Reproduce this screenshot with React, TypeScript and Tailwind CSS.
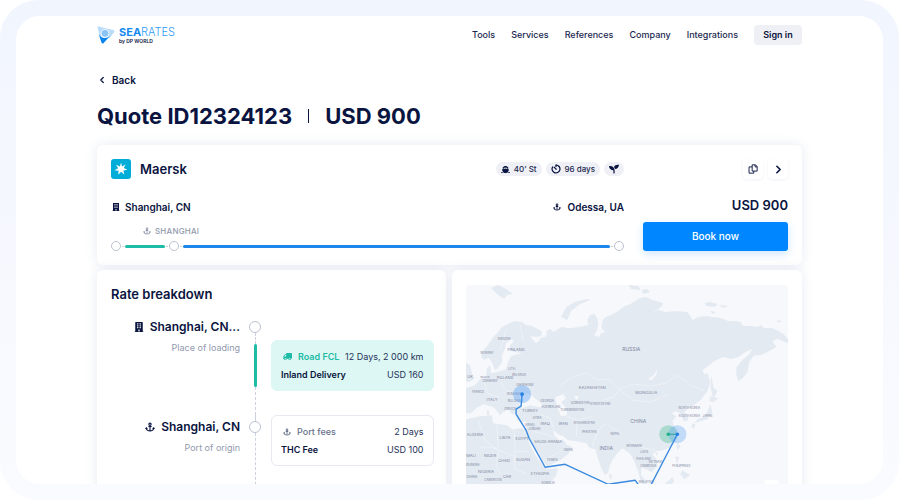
import React from 'react';
import clsx from 'clsx';
import { FaAnchor, FaBuilding, FaSeedling, FaShip, FaTruck } from 'react-icons/fa';
import { LuChevronLeft, LuChevronRight } from 'react-icons/lu';

const navLinks = ['Tools', 'Services', 'References', 'Company', 'Integrations'];

const Logo = () => (
  <a href="#" className="flex items-start gap-1 leading-none">
    <svg viewBox="0 0 54 54" className="h-[18px] w-[18px]">
      <path d="M1 1 L51 13 Q54 15 51 19 L38 36 L8 30 Z" fill="#b9dcfb" />
      <path d="M5 23 Q12 36 23 36 Q33 36 39 30 L20 51 Q16 55 13 49 Z" fill="#0a84ee" />
      <circle cx="24" cy="22" r="12" fill="#8cc4f9" stroke="#eef7ff" strokeWidth="3" />
    </svg>
    <span className="flex flex-col">
      <span className="text-[11px] leading-3 text-[#2f9bf5]">
        <b className="font-bold text-[#168af0]">SEA</b>
        <span className="font-light">RATES</span>
      </span>
      <span className="text-[5px] leading-[6px] font-semibold text-[#0a1440]">by DP WORLD</span>
    </span>
  </a>
);

const Header = () => (
  <header className="flex h-5 items-center justify-between">
    <Logo />
    <nav className="flex items-center gap-4 text-[9px] font-medium text-[#1c2850]">
      {navLinks.map((link) => (
        <a key={link} href="#">
          {link}
        </a>
      ))}
      <button className="h-5 w-12 rounded-[4px] bg-[#eff0f5] font-semibold text-[#0a1440]">Sign in</button>
    </nav>
  </header>
);

const Pill = ({ children }: { children: React.ReactNode }) => (
  <span className="flex h-[14px] items-center gap-1 rounded-full bg-[#eff0f5] px-[5px] text-[8px] leading-none font-medium text-[#1c2850]">
    {children}
  </span>
);

const TimerIcon = () => (
  <svg viewBox="0 0 24 24" className="h-[10px] w-[10px]" fill="none" stroke="#0a1440" strokeWidth="3">
    <path d="M12 2.5 A9.5 9.5 0 1 1 4.5 6.2" />
    <path d="M12.5 12.5 L7.5 7.5" strokeLinecap="round" />
    <path d="M12 1 V7" />
  </svg>
);

const CopyIcon = () => (
  <svg viewBox="0 0 24 24" className="h-[10px] w-[10px]" fill="none" stroke="#0a1440" strokeWidth="2.2">
    <path d="M10 2 H18 L22 6 V17 H10 Z" strokeLinejoin="round" />
    <path d="M17 2 V7 H22" />
    <path d="M10 7 H2.5 V22 H14 V17" strokeLinejoin="round" />
  </svg>
);

const Stop = () => <span className="h-[10px] w-[10px] shrink-0 rounded-full border border-[#bcc1d0] bg-white" />;

const Dash = () => <span className="h-px w-[2px] bg-[#cdd1de]" />;

const QuoteCard = () => (
  <section className="rounded-md bg-white px-[14px] pt-[14px] pb-[14px] shadow-[0_0_12px_rgba(70,90,160,0.13)]">
    <div className="flex gap-[19px]">
      <div className="flex-1">
        <div className="flex h-5 items-center justify-between">
          <div className="flex items-center gap-[9px]">
            <svg viewBox="0 0 20 20" className="h-5 w-5">
              <rect width="20" height="20" rx="3" fill="#00add8" />
              <path
                d="M10 3.6 L11 7.5 L14.6 5.4 L12.7 9 L16.4 10.7 L12.4 11.4 L13.3 15.5 L10.1 12.8 L7.2 15.8 L7.6 11.7 L3.5 11.2 L7.1 9.2 L5.1 5.7 L8.9 7.4 Z"
                fill="#fff"
              />
            </svg>
            <h2 className="text-[13px] leading-4 font-semibold">Maersk</h2>
          </div>
          <div className="flex gap-1">
            <Pill>
              <FaShip size={9} color="#0a1440" /> 40’ St
            </Pill>
            <Pill>
              <TimerIcon /> 96 days
            </Pill>
            <Pill>
              <FaSeedling size={10} color="#0a1440" />
            </Pill>
          </div>
        </div>
        <div className="mt-[22px] flex h-3 items-center justify-between text-[10px] font-semibold">
          <span className="flex items-center gap-[5px] pl-px">
            <FaBuilding size={8} /> Shanghai, CN
          </span>
          <span className="flex items-center gap-[6px]">
            <FaAnchor size={8} /> Odessa, UA
          </span>
        </div>
        <div className="mt-3 ml-8 flex h-3 items-center gap-1 text-[8px] font-medium tracking-wide text-[#9299ad]">
          <FaAnchor size={8} /> SHANGHAI
        </div>
        <div className="mt-1 flex h-[10px] items-center gap-px">
          <Stop />
          <Dash />
          <span className="h-[3px] w-10 rounded-full bg-[#1ebba6]" />
          <Dash />
          <Stop />
          <Dash />
          <span className="h-[3px] flex-1 rounded-full bg-[#1c86ea]" />
          <Dash />
          <Stop />
        </div>
      </div>
      <div className="flex w-[145px] flex-col items-end">
        <div className="flex h-5 gap-[5px]">
          <button
            aria-label="Copy quote"
            className="flex h-5 w-5 items-center justify-center rounded shadow-[0_1px_3px_rgba(70,90,160,0.08)]"
          >
            <CopyIcon />
          </button>
          <button
            aria-label="Next quote"
            className="flex h-5 w-5 items-center justify-center rounded shadow-[0_1px_3px_rgba(70,90,160,0.08)]"
          >
            <LuChevronRight size={13} strokeWidth={3} />
          </button>
        </div>
        <strong className="mt-[18px] text-[13px] leading-4 font-semibold">USD 900</strong>
        <button className="mt-[9px] h-[29px] w-full rounded-[3px] bg-[#0087ff] text-[10px] font-medium text-white shadow-[0_3px_8px_rgba(0,135,255,0.2)]">
          Book now
        </button>
      </div>
    </div>
  </section>
);

interface FeeProps {
  icon: React.ReactNode;
  type: string;
  duration: string;
  name: string;
  price: string;
  road?: boolean;
}

const Fee = ({ icon, type, duration, name, price, road }: FeeProps) => (
  <div
    className={clsx(
      'flex h-[51px] flex-1 flex-col justify-center gap-[6px] rounded-md border px-[9px] text-[9px] leading-3 text-[#27325a]',
      road ? 'border-[#dcf7f4] bg-[#dcf7f4]' : 'border-[#e6eaf0] bg-white'
    )}
  >
    <div className="flex items-center justify-between">
      <span className={clsx('flex items-center gap-[6px] pl-[2px]', road ? 'font-semibold text-[#1ebba6]' : 'font-medium text-[#69728c]')}>
        {icon} {type}
      </span>
      <span>{duration}</span>
    </div>
    <div className="flex items-center justify-between">
      <span className="font-semibold text-[#0a1440]">{name}</span>
      <span>{price}</span>
    </div>
  </div>
);

const Place = ({ icon, name, role }: { icon: React.ReactNode; name: string; role: string }) => (
  <div className="flex w-[129px] flex-col items-end">
    <span className="flex items-center gap-[6px] text-[12px] leading-3 font-semibold">
      {icon} {name}
    </span>
    <span className="mt-[9px] text-[9px] leading-3 text-[#9299ad]">{role}</span>
  </div>
);

const Node = () => <span className="h-3 w-3 shrink-0 rounded-full border border-[#bcc1d0] bg-white" />;

const RateBreakdown = () => (
  <section className="flex-1 rounded-md bg-white pt-4 pr-3 pl-[14px] shadow-[0_0_12px_rgba(70,90,160,0.13)]">
    <h2 className="text-[13px] leading-4 font-semibold">Rate breakdown</h2>
    <ol className="mt-[19px]">
      <li className="flex h-[94px]">
        <Place icon={<FaBuilding size={10} />} name="Shanghai, CN..." role="Place of loading" />
        <div className="mr-[10px] ml-[9px] flex w-3 flex-col items-center">
          <Node />
          <span className="h-[11px] border-l border-dashed border-[#cdd1de]" />
          <span className="h-[43px] w-[3px] rounded-full bg-[#1ebba6]" />
          <span className="flex-1 border-l border-dashed border-[#cdd1de]" />
        </div>
        <div className="flex flex-1 items-start pt-[19px]">
          <Fee
            icon={<FaTruck size={9} className="-scale-x-100" />}
            type="Road FCL"
            duration="12 Days, 2 000 km"
            name="Inland Delivery"
            price="USD 160"
            road
          />
        </div>
      </li>
      <li className="flex h-[94px]">
        <div className="pt-[6px]">
          <Place icon={<FaAnchor size={10} />} name="Shanghai, CN" role="Port of origin" />
        </div>
        <div className="mr-[10px] ml-[9px] flex w-3 flex-col items-center">
          <span className="h-[6px] border-l border-dashed border-[#cdd1de]" />
          <Node />
          <span className="flex-1 border-l border-dashed border-[#cdd1de]" />
        </div>
        <div className="flex flex-1 items-start">
          <Fee icon={<FaAnchor size={8} />} type="Port fees" duration="2 Days" name="THC Fee" price="USD 100" />
        </div>
      </li>
    </ol>
  </section>
);

const countries: [string, number, number, number][] = [
  ['RUSSIA', 631, 351, 5],
  ['KAZAKHSTAN', 592, 389, 4],
  ['MONGOLIA', 646, 394, 4],
  ['CHINA', 638, 423, 5],
  ['NORWAY', 487, 354, 3],
  ['SWEDEN', 504, 340, 3],
  ['FINLAND', 516, 351, 4],
  ['LITH.', 512, 370, 3],
  ['BELARUS', 519, 376, 3],
  ['UK', 470, 378, 4],
  ['POLAND', 505, 379, 4],
  ['GERMANY', 490, 382, 3],
  ['BELGIUM', 485, 378, 2],
  ['UKRAINE', 525, 386, 4],
  ['FRANCE', 478, 393, 3],
  ['ROMANIA', 514, 395, 3],
  ['ITALY', 492, 401, 4],
  ['BULGARIA', 515, 402, 3],
  ['GREECE', 510, 410, 3],
  ['TURKEY', 530, 412, 4],
  ['GEORGIA', 547, 402, 3],
  ['AZERBAIJAN', 551, 408, 3],
  ['UZBEKISTAN', 580, 404, 3],
  ['KYRGYZSTAN', 600, 405, 3],
  ['TURKMENISTAN', 572, 411, 3],
  ['SYRIA', 537, 419, 3],
  ['ISRAEL', 530, 426, 3],
  ['JORDAN', 534, 430, 3],
  ['IRAQ', 545, 425, 4],
  ['IRAN', 563, 425, 4],
  ['AFGHANISTAN', 584, 424, 3],
  ['PAKISTAN', 589, 433, 3],
  ['NEPAL', 615, 435, 3],
  ['INDIA', 606, 450, 5],
  ['SAUDI ARABIA', 548, 443, 4],
  ['OMAN', 568, 451, 3],
  ['YEMEN', 552, 461, 3],
  ['ALGERIA', 475, 436, 4],
  ['LIBYA', 505, 439, 4],
  ['EGYPT', 522, 440, 4],
  ['MALI', 471, 457, 4],
  ['NIGER', 490, 457, 4],
  ['CHAD', 504, 462, 4],
  ['SUDAN', 523, 461, 4],
  ['BURKINA', 473, 466, 3],
  ['NIGERIA', 486, 473, 4],
  ['CAR', 507, 478, 4],
  ['ETHIOPIA', 540, 475, 4],
  ['GHANA', 472, 478, 3],
  ['CAMEROON', 493, 481, 3],
  ['SOMALIA', 548, 484, 3],
  ['MYANMAR', 634, 447, 3],
  ['LAOS', 644, 453, 3],
  ['THAILAND', 643, 460, 3],
  ['VIETNAM', 655, 463, 3],
  ['CAMBODIA', 648, 467, 3],
  ['NORTH KOREA', 689, 409, 3],
  ['SOUTH KOREA', 689, 417, 3],
  ['JAPAN', 707, 417, 3],
  ['PHILIPPINES', 681, 467, 3],
  ['MALAYSIA', 646, 483, 3],
];

// land first, inland water cut out on top, then borders and labels
const RouteMap = () => (
  <svg viewBox="466 285 322 215" className="block w-full rounded-[4px] bg-[#f7f8fb]" role="img" aria-label="Route map">
    <g fill="#e4eaf2">
      <path d="M482 352 L486 347 490 342 494 336 498 332 502 327 508 324 514 321 522 322 526 325 532 326 538 329 542 332 541 336 536 337 530 336 533 340 536 343 539 341 540 338 545 337 547 334 546 331 550 329 553 332 558 329 562 327 567 328 572 328 578 327 584 326 588 325 587 320 590 315 594 314 597 318 598 324 597 330 594 335 599 337 601 333 605 332 601 328 602 322 604 318 608 316 613 314 618 311 623 307 630 304 635 301 640 298 646 297 652 300 663 303 661 307 652 313 658 310 665 312 676 311 687 312 690 316 692 320 698 317 706 316 712 317 720 318 728 321 735 321 740 322 743 326 750 326 757 327 760 325 764 328 771 328 778 331 784 335 788 340 788 343 782 341 777 339 772 341 776 347 769 351 760 355 753 356 749 362 747 372 742 378 738 381 736 374 736 367 742 360 748 355 752 349 745 352 738 357 731 359 723 357 716 360 709 365 702 370 704 374 707 373 710 382 707 391 700 400 692 406 687 409 684 412 688 417 687 421 683 421 681 414 676 411 671 413 676 416 672 421 674 426 678 431 677 439 672 446 663 450 656 451 652 454 657 460 657 466 651 472 646 469 641 467 641 475 646 481 650 492 644 488 640 480 638 471 634 461 630 454 625 450 622 448 617 453 612 460 609 467 608 472 605 475 601 468 598 459 595 449 590 448 586 443 577 441 568 440 563 436 558 434 553 430 554 435 560 441 563 439 566 444 572 447 568 454 560 460 547 466 543 462 538 453 530 441 528 440 534 453 541 463 547 469 558 468 556 475 548 486 546 500 466 500 466 419 480 416 492 415 493 423 507 425 512 429 521 428 526 429 527 422 517 420 516 413 512 414 508 408 504 412 496 408 484 404 477 407 471 413 466 413 466 388 475 385 480 379 486 376 487 368 490 365 491 373 500 371 506 369 508 362 511 356 522 353 514 352 509 349 510 345 514 341 511 339 506 343 505 348 502 355 502 362 498 368 495 370 492 363 489 358 484 360 481 357 Z" />
      <path d="M466 363 L470 365 472 373 474 379 468 382 466 381 Z" />
      <path d="M491 288 L498 285 506 289 513 294 507 295 504 299 498 295 Z" />
      <path d="M561 317 L566 307 575 302 587 299 590 300 580 304 571 311 567 320 Z" />
      <path d="M628 285 L638 286 640 290 631 289 Z M641 290 L647 289 650 292 643 294 Z" />
      <path d="M704 303 L710 302 717 304 715 307 706 306 Z M719 305 L728 306 723 308 Z M710 311 L716 312 712 314 Z M776 320 L782 321 778 323 Z" />
      <path d="M711 375 L713 387 717 391 713 399 710 387 Z M710 396 L718 398 713 402 709 401 Z M710 404 L712 412 707 419 700 421 694 423 697 419 705 416 Z M692 423 L695 424 694 428 691 427 Z" />
      <path d="M677 443 L680 445 678 450 676 447 Z M675 456 L679 457 677 463 681 468 677 466 Z M682 470 L690 475 684 479 680 474 Z M664 484 L672 477 674 481 668 488 Z M609 473 L612 475 611 479 609 478 Z M655 452 L658 453 656 456 Z" />
      <path d="M497 403 L503 412 500 415 494 407 Z M487 410 L489 410 489 415 487 415 Z M519 420 L524 421 520 422 Z" />
    </g>
    <g fill="#f7f8fb">
      <path d="M519 404 L520 397 526 393 531 395 536 399 542 404 540 407 530 405 522 408 Z" />
      <path d="M555 397 L563 394 566 398 561 402 566 408 567 415 561 416 557 407 Z" />
      <path d="M574 395 L579 396 576 400 Z" />
      <path d="M648 379 L654 374 657 369 656 375 651 380 Z" />
    </g>
    <path
      d="M520 325 L523 340 M506 330 L500 350 M478 420 L485 440 500 451 M497 424 L498 447 M514 429 L515 451 529 451 M480 447 L492 447 514 456 M499 451 L496 465 500 474 M515 451 L514 468 527 474 M540 414 L550 418 554 430 M533 431 L545 434 553 437 M545 460 L562 450 M566 416 L577 420 576 437 M577 420 L592 416 M592 446 L598 430 606 423 622 435 M560 386 L572 377 586 373 596 379 610 380 619 389 613 397 603 400 M619 389 L633 384 650 386 666 383 677 375 690 385 703 390 M619 389 L633 400 650 402 668 394 M513 378 L522 384 534 384 M500 382 L507 391 518 393 M630 440 L640 447 655 450 M484 382 L488 394 500 397"
      fill="none"
      stroke="#f2f5f9"
      strokeWidth="0.7"
    />
    <g fill="#7d869d" textAnchor="middle" fontFamily="Inter, sans-serif">
      {countries.map(([name, x, y, size]) => (
        <text key={name} x={x} y={y} fontSize={size}>
          {name}
        </text>
      ))}
    </g>
    <circle cx="522" cy="394" r="9" fill="#69aaf5" fillOpacity="0.45" />
    <circle cx="668" cy="434" r="9" fill="#3fbd8f" fillOpacity="0.35" />
    <circle cx="677" cy="434" r="9" fill="#69aaf5" fillOpacity="0.38" />
    <path
      d="M522 394 L521 406 516 409 516 414 526 430 529 438 545 467 565 464 608 484 635 480 640 487 647 490 651 484 677 434"
      fill="none"
      stroke="#3a8be0"
      strokeWidth="1.4"
      strokeLinejoin="round"
    />
    <path d="M668 434 H677" stroke="#2c9f93" strokeWidth="1" />
    <circle cx="522" cy="394" r="1.8" fill="#2381e4" />
    <circle cx="668" cy="434" r="1.8" fill="#22b08a" />
    <circle cx="677" cy="434" r="1.8" fill="#2381e4" />
    <rect x="764" y="480" width="14" height="14" rx="1" fill="#fff" />
  </svg>
);

const App = () => {
  return (
    <div className="h-screen overflow-hidden rounded-[38px] bg-linear-to-b from-[#f1f5fd] to-[#fafbff] p-4 font-['Inter',sans-serif] text-[#0a1440]">
      <main className="h-full overflow-hidden rounded-[24px] bg-white px-[81px] pt-[9px]">
        <Header />
        <a href="#" className="mt-[27px] flex h-4 w-fit items-center gap-[5px] text-[10px] font-semibold">
          <LuChevronLeft size={10} strokeWidth={3} /> Back
        </a>
        <h1 className="mt-[14px] flex h-7 items-center gap-4 text-[22px] font-bold">
          Quote ID12324123
          <span className="h-[14px] w-px bg-[#0a1440]" />
          <span>USD 900</span>
        </h1>
        <div className="mt-[15px] flex flex-col gap-[5px]">
          <QuoteCard />
          <div className="flex items-start gap-[6px]">
            <RateBreakdown />
            <section className="flex-1 rounded-md bg-white px-[14px] pt-[15px] pb-4 shadow-[0_0_12px_rgba(70,90,160,0.13)]">
              <RouteMap />
            </section>
          </div>
        </div>
      </main>
    </div>
  );
};

export default App;
